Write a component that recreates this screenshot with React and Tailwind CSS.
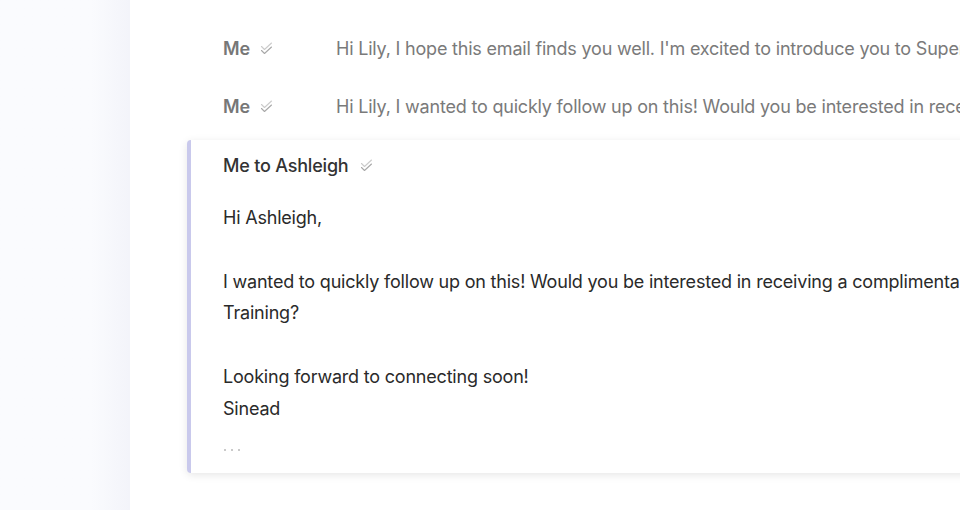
const DoubleCheck = ({ className = "" }) => (
  <svg
    className={className}
    width="13"
    height="13"
    viewBox="0 0 13 13"
    fill="none"
    stroke="currentColor"
    strokeWidth="1.1"
    strokeLinecap="round"
    strokeLinejoin="round"
  >
    <path d="M1.5 4.5l3 3 7-6.5" opacity="0.6" />
    <path d="M1.5 8.5l3 3 7-6.5" />
  </svg>
);

const threadRows = [
  {
    from: "Me",
    preview:
      "Hi Lily, I hope this email finds you well. I'm excited to introduce you to SuperHuman Training and the benefits it offers.",
  },
  {
    from: "Me",
    preview:
      "Hi Lily, I wanted to quickly follow up on this! Would you be interested in receiving a complimentary session?",
  },
];

const App = () => {
  return (
    <div
      className="flex h-[510px] w-[960px] overflow-hidden bg-white tracking-[-0.2px]"
      style={{ fontFamily: "Inter, 'Noto Sans', sans-serif" }}
    >
      {/* sidebar */}
      <div className="w-[130px] shrink-0 bg-gradient-to-r from-[#fafbfe] from-70% to-[#f3f4fa]" />

      {/* thread */}
      <div className="flex-1 min-w-0 overflow-hidden pl-[57px] pt-[19px]">
        {threadRows.map((row, i) => (
          <div key={i} className="flex h-[58px] items-center pl-[36px] text-[18px] whitespace-nowrap">
            <div className="flex w-[113px] shrink-0 items-center gap-[10px]">
              <span className="font-semibold text-[#777777]">{row.from}</span>
              <DoubleCheck className="text-[#a8a8a8]" />
            </div>
            <span className="text-[#7a7a7a]">{row.preview}</span>
          </div>
        ))}

        <div className="mt-[5px] h-[333px] w-[900px] rounded-l-[4px] border-l-4 border-[#c9c9ec] bg-white pl-[32px] pt-[9px] shadow-[0_2px_8px_rgba(0,0,0,0.10)]">
          <div className="flex h-[32px] items-center gap-[12px]">
            <span className="text-[18px] font-medium text-[#333333]">Me to Ashleigh</span>
            <DoubleCheck className="text-[#a8a8a8]" />
          </div>
          <div className="mt-[21px] whitespace-nowrap text-[18px] leading-[31.8px] text-[#2a2a2a]">
            <p>Hi Ashleigh,</p>
            <p>&nbsp;</p>
            <p>
              I wanted to quickly follow up on this! Would you be interested in receiving a complimentary
              session of SuperHuman
            </p>
            <p>Training?</p>
            <p>&nbsp;</p>
            <p>Looking forward to connecting soon!</p>
            <p>Sinead</p>
          </div>
          <div className="mt-[24px] flex gap-[5px] pl-[1px]">
            <span className="h-[2px] w-[2px] rounded-full bg-[#b8b8b8]" />
            <span className="h-[2px] w-[2px] rounded-full bg-[#b8b8b8]" />
            <span className="h-[2px] w-[2px] rounded-full bg-[#b8b8b8]" />
          </div>
        </div>
      </div>
    </div>
  );
};

export default App;
